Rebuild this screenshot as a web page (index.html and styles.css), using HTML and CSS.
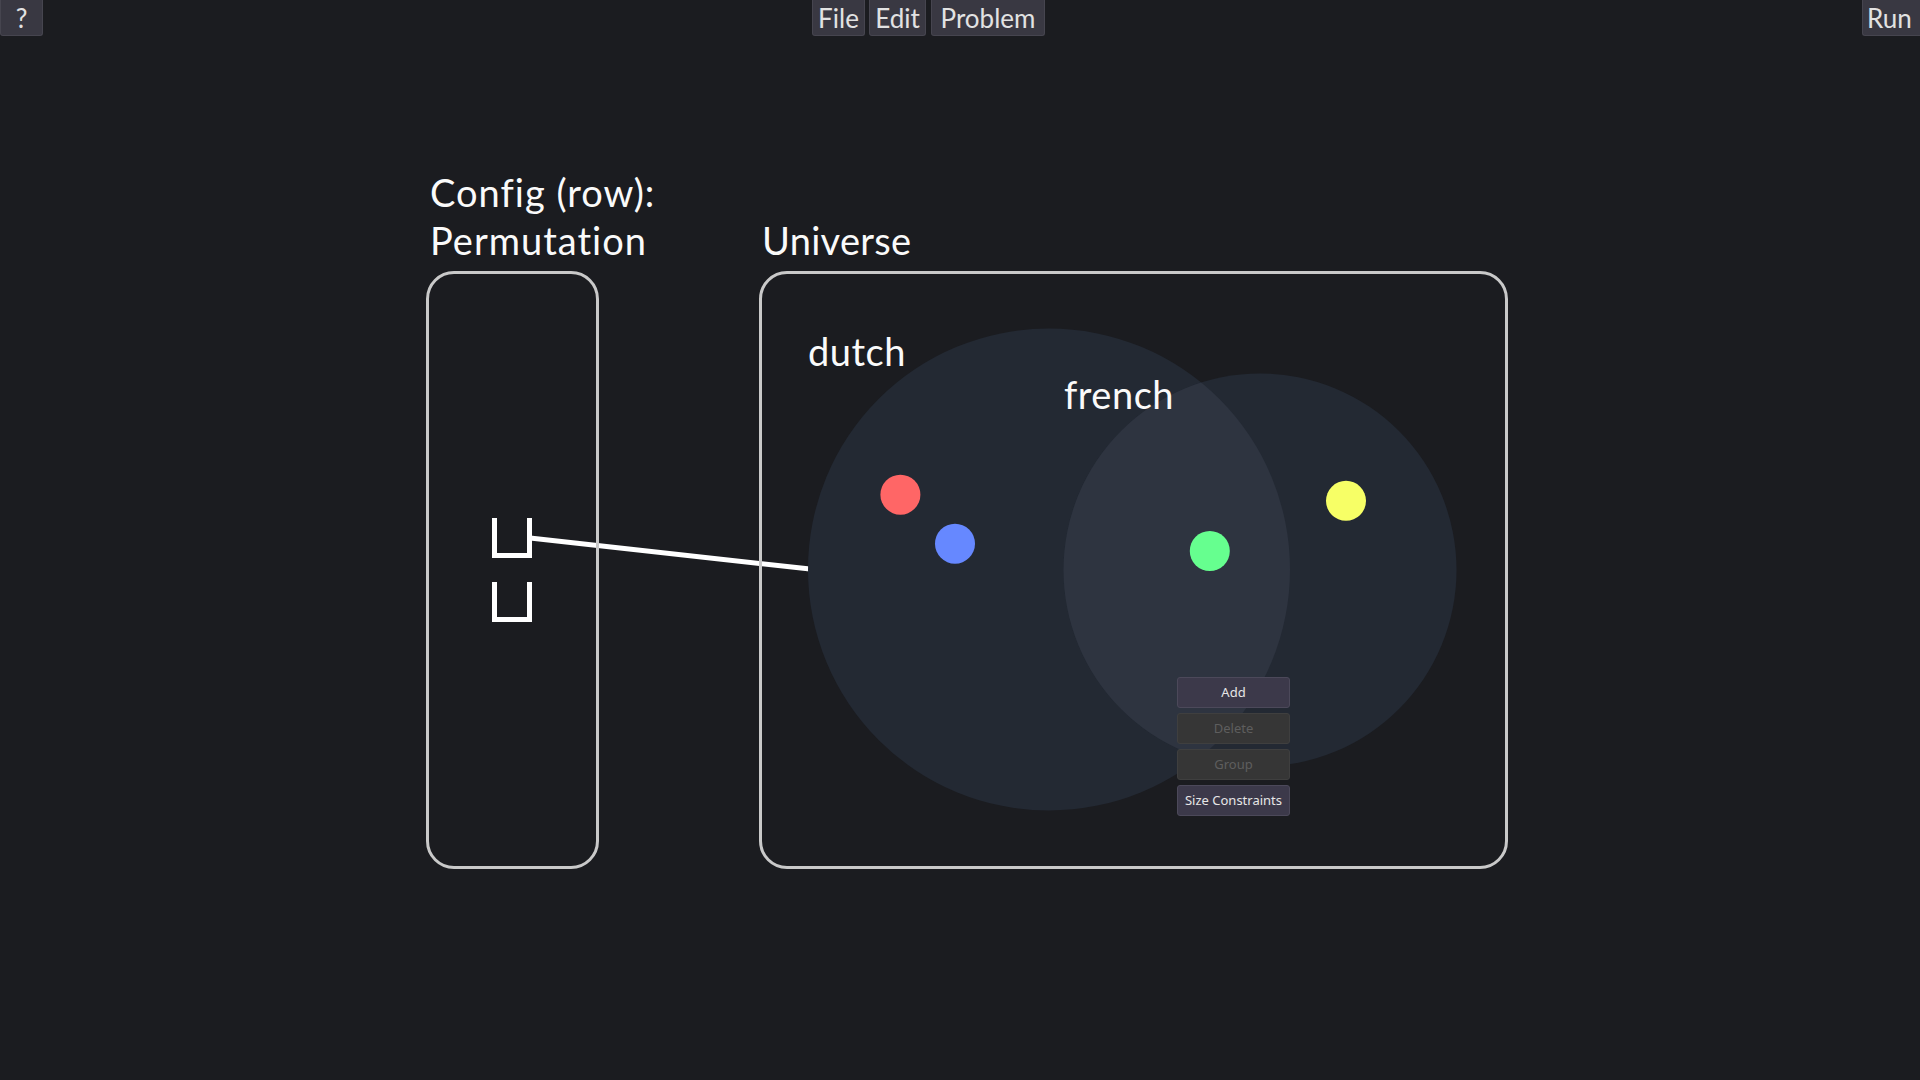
FILE: index.html
```html
<!DOCTYPE html>
<html>
<head>
<meta charset="utf-8">
<link rel="stylesheet" href="styles.css">
</head>
<body>
<div class="topbar">
  <div class="tbtn help">?</div>
  <div class="menu">
    <div class="tbtn m-file">File</div>
    <div class="tbtn m-edit">Edit</div>
    <div class="tbtn m-problem">Problem</div>
  </div>
  <div class="tbtn run">Run</div>
</div>

<svg class="link" width="1920" height="1080" viewBox="0 0 1920 1080">
  <line x1="530" y1="538" x2="810" y2="569" stroke="#ffffff" stroke-width="5"/>
</svg>

<main class="stage">
  <section class="col config">
    <h2 class="title">Config (row):<br>Permutation</h2>
    <div class="box configbox">
      <div class="slot"></div>
      <div class="slot"></div>
    </div>
  </section>
  <section class="col universe">
    <h2 class="title">Universe</h2>
    <div class="box unibox">
      <svg class="sets" width="743" height="592" viewBox="0 0 743 592">
        <defs>
          <clipPath id="dutchClip"><circle cx="287" cy="295.5" r="241"/></clipPath>
        </defs>
        <circle cx="287" cy="295.5" r="241" fill="#232933"/>
        <circle cx="498" cy="296" r="196.5" fill="#232933"/>
        <circle cx="498" cy="296" r="196.5" fill="#2e3440" clip-path="url(#dutchClip)"/>
        <circle cx="138.4" cy="220.7" r="20" fill="#ff6666"/>
        <circle cx="193" cy="269.7" r="20" fill="#6688ff"/>
        <circle cx="447.8" cy="277" r="20" fill="#66ff8f"/>
        <circle cx="584" cy="226.8" r="20" fill="#f7ff66"/>
      </svg>
      <div class="label dutch">dutch</div>
      <div class="label french">french</div>
      <div class="popup">
        <div class="pbtn">Add</div>
        <div class="pbtn disabled">Delete</div>
        <div class="pbtn disabled">Group</div>
        <div class="pbtn">Size Constraints</div>
      </div>
    </div>
  </section>
</main>
</body>
</html>
```

FILE: styles.css
```css
html, body {
  margin: 0;
  padding: 0;
  background: #1b1c20;
  width: 1920px;
  height: 1080px;
  overflow: hidden;
  color: #fafafa;
  font-family: Lato, "Noto Sans", sans-serif;
}

.topbar {
  display: flex;
  align-items: flex-start;
  height: 36px;
}

.tbtn {
  box-sizing: border-box;
  height: 36px;
  padding: 0;
  background: #393842;
  border: 1px solid #46454f;
  border-top: none;
  border-radius: 0 0 3px 3px;
  color: #e2e2e2;
  font-family: Lato, sans-serif;
  font-size: 26px;
  line-height: 36px;
  text-align: center;
  font-variant-ligatures: none;
}

.help {
  width: 43px;
}

.menu {
  display: flex;
  gap: 4px;
  margin-left: 769px;
}

.m-file { width: 53px; }
.m-edit { width: 57px; }
.m-problem { width: 114px; margin-left: 1px; }

.run {
  margin-left: auto;
  width: 58px;
  padding: 0 0 0 4px;
  text-align: left;
  border-right: none;
  border-radius: 0 0 0 3px;
}

.link {
  position: absolute;
  left: 0;
  top: 0;
  z-index: 0;
  pointer-events: none;
}

.stage {
  display: flex;
  align-items: flex-end;
  gap: 160px;
  padding: 132px 0 0 426px;
}

.col {
  display: flex;
  flex-direction: column;
  flex-shrink: 0;
}

.config {
  width: 173px;
}

.universe {
  width: 749px;
}

.title {
  margin: 0 0 7px 5px;
  font-family: Lato, sans-serif;
  font-weight: 400;
  font-size: 38px;
  line-height: 48px;
  color: #fafafa;
  white-space: nowrap;
  font-variant-ligatures: none;
  letter-spacing: 0.3px;
}

.config .title {
  margin-left: 4px;
  letter-spacing: 1px;
}

.universe .title {
  margin-left: 3px;
}

.box {
  position: relative;
  z-index: 1;
  box-sizing: border-box;
  height: 598px;
  border: 3px solid #c9c9c9;
  border-radius: 28px;
}

.configbox {
  width: 173px;
  display: flex;
  flex-direction: column;
  align-items: center;
  justify-content: center;
  gap: 24px;
}

.slot {
  box-sizing: border-box;
  width: 40px;
  height: 40px;
  border: 5px solid #ffffff;
  border-top: none;
  margin-left: -1px;
}

.unibox {
  width: 749px;
}

.sets {
  position: absolute;
  left: 0;
  top: 0;
}

.label {
  position: absolute;
  font-family: Lato, sans-serif;
  font-size: 38px;
  line-height: 48px;
  color: #fafafa;
  letter-spacing: 0.5px;
}

.dutch {
  left: 46px;
  top: 53px;
}

.french {
  left: 302px;
  top: 96px;
}

.popup {
  position: absolute;
  left: 415px;
  top: 403px;
  display: flex;
  flex-direction: column;
  gap: 5px;
  width: 113px;
}

.pbtn {
  box-sizing: border-box;
  height: 31px;
  background: #3c394a;
  border: 1px solid #4c495a;
  border-radius: 3px;
  color: #e6e6e6;
  font-family: "Noto Sans", sans-serif;
  font-size: 13px;
  line-height: 29px;
  text-align: center;
  white-space: nowrap;
}

.pbtn.disabled {
  background: #363636;
  border-color: #3f3f3f;
  color: #5e5e5e;
}
```
